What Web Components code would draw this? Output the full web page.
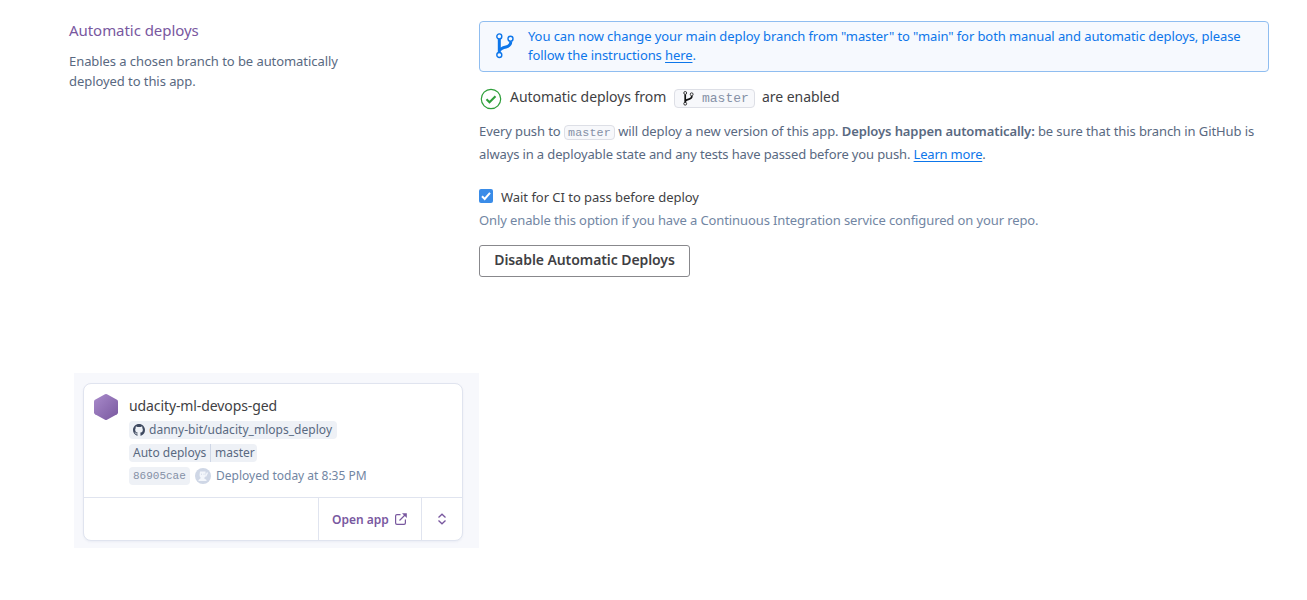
<!DOCTYPE html>
<html lang="en">
<head>
<meta charset="utf-8">
<title>Automatic deploys</title>
<style>
html,body{margin:0;background:#fff}
body{width:1307px;height:600px;overflow:hidden;font-family:"Noto Sans",sans-serif;font-size:13px;color:#3f3f44}
</style>
</head>
<body>
<deploy-page></deploy-page>
<script>
function define(name, html) {
  customElements.define(name, class extends HTMLElement {
    constructor() {
      super();
      this.attachShadow({ mode: 'open' }).innerHTML = html;
    }
  });
}

define('branch-icon', `
<style>:host{display:block;flex:none}svg{display:block;width:100%;height:100%}</style>
<svg viewBox="0 0 18 26" fill="none" stroke="currentColor">
  <path d="M3.300 6v14" stroke-width="3"/>
  <path d="M14.800 8.600c0 3.600-1.600 4.600-4.800 5.400-3.200.8-5.600 1.500-6.400 3.600" stroke-width="2.900"/>
  <circle cx="3.300" cy="3.400" r="2.500" stroke-width="1.400"/>
  <circle cx="14.500" cy="5.700" r="2.500" stroke-width="1.400"/>
  <circle cx="3.300" cy="22" r="2.500" stroke-width="1.400"/>
</svg>`);

define('section-intro', `
<style>
:host{display:block;white-space:nowrap}
h2{margin:-1px 0 0;font-size:15px;line-height:20px;font-weight:400;color:#79589f;letter-spacing:-.05px}
p{margin:11px 0 0;font-size:13px;line-height:20px;color:#596981;letter-spacing:-.065px}
</style>
<h2><slot name="title"></slot></h2><p><slot></slot></p>`);

define('info-banner', `
<style>
:host{display:flex;box-sizing:border-box;width:790px;height:51px;border:1px solid #8fbdf0;border-radius:4px;background:#f6f9fe;color:#0d76ea;padding:5px 0 0 16px;line-height:19px;white-space:nowrap;letter-spacing:-.09px}
branch-icon{width:18px;height:26px;margin:6px 14px 0 0}
</style>
<branch-icon></branch-icon><div><slot></slot></div>`);

define('branch-tag', `
<style>
:host{display:flex;box-sizing:border-box;width:81px;height:19px;border:1px solid #dddfe6;border-radius:4px;background:#f7f8fb;align-items:center;font:13px/17px "Liberation Mono",monospace;color:#8590a6;padding-left:8px}
branch-icon{width:11px;height:15px;color:#111;margin-right:8px}
</style>
<branch-icon></branch-icon><slot></slot>`);

define('code-chip', `
<style>
:host{display:inline-block;box-sizing:border-box;width:51px;height:15px;border:1px solid #dddfe6;border-radius:4px;background:#f7f8fb;font:11.7px/14px "Liberation Mono",monospace;color:#8590a6;text-align:center;vertical-align:-3px;letter-spacing:.1px;position:relative;top:-3px}
</style><slot></slot>`);

define('deploy-status', `
<style>
:host{display:flex;height:22px;font-size:14px;line-height:20px;white-space:nowrap;letter-spacing:-.05px}
svg{width:22px;height:22px;margin:1px 8px 0 1px;flex:none}
branch-tag{margin:2px 7px 0 8px;letter-spacing:0}
.a{width:156px}
</style>
<svg viewBox="0 0 22 22" fill="none" stroke="#2f9f3b"><circle cx="11" cy="11" r="9.7" stroke-width="1.2"/><path d="M6.500 11.200l3 3 6-6" stroke-width="2.100"/></svg>
<span class="a"><slot name="before"></slot></span><branch-tag><slot name="branch"></slot></branch-tag><slot name="after"></slot>`);

define('check-option', `
<style>
:host{display:block;white-space:nowrap}
.row{display:flex;line-height:20px;letter-spacing:-.035px}
svg{width:14px;height:14px;margin:2px 8px 0 0}
.hint{line-height:20px;margin-top:3px;color:#7286a3;letter-spacing:-.108px}
</style>
<div class="row"><svg viewBox="0 0 14 14"><rect width="14" height="14" rx="2" fill="#3a8ce8"/><path d="M3 7.200l2.700 2.800L11 3.800" fill="none" stroke="#fff" stroke-width="2"/></svg><slot></slot></div>
<div class="hint"><slot name="hint"></slot></div>`);

define('outline-button', `
<style>
:host{display:block}
button{box-sizing:border-box;display:block;width:211px;height:32px;padding:0 0 3px;background:#fff;border:1px solid #88888c;border-radius:3px;font:600 14px/20px "Noto Sans",sans-serif;color:#3f3f44;white-space:nowrap;letter-spacing:-.08px}
</style><button><slot></slot></button>`);

define('app-card', `
<style>
:host{display:block;box-sizing:border-box;width:405px;height:175px;padding:10px 0 0 9px;background:#f7f8fc}
.card{box-sizing:border-box;width:380px;height:158px;border:1px solid #e0e4ef;border-radius:8px;background:#fff;box-shadow:0 1px 2px #d9deea66;white-space:nowrap;display:flex;flex-direction:column}
.body{display:flex;height:113px;padding-left:10px}
.hex{width:24px;height:26px;margin:10px 11px 0 0;flex:none}
.name{font-size:14px;line-height:20px;margin-top:12px;color:#3f3f44;letter-spacing:-.1px}
.pill{box-sizing:border-box;display:flex;height:18px;border-radius:4px;background:#eef1f6;color:#596981;line-height:17px;font-size:12px}
.repo{margin-top:5px;padding:0 4px;width:208px;letter-spacing:.03px}
.repo svg{width:12px;height:12px;margin:3px 4px 0 0;flex:none}
.auto{margin-top:5px;width:128px}
.auto span{padding-left:4px}
.auto .l{box-sizing:border-box;width:82px;height:18px;border-right:1px solid #cfd7e6}
.last{display:flex;margin-top:5px;height:18px;color:#7286a3;font-size:12px;line-height:17px}
.sha{width:61px;padding-left:4px;font:11px/18px "Liberation Mono",monospace;color:#8590a6}
.last svg{width:16px;height:16px;margin:1px 5px 0}
.foot{display:flex;flex:1;border-top:1px solid #e0e4ef;color:#79589f;font-weight:600}
.sp{width:234px}
.open{box-sizing:border-box;display:flex;align-items:center;width:103px;padding-left:13px;border-left:1px solid #e0e4ef;font-size:12px}
.open svg{width:12px;height:12px;margin-left:6px}
.more{flex:1;display:flex;align-items:center;justify-content:center;border-left:1px solid #e0e4ef}
.more svg{width:10px;height:12px}
</style>
<div class="card">
 <div class="body">
  <svg class="hex" viewBox="0 0 24 26"><defs><linearGradient id="g" x1="0" y1="0" x2="1" y2="1"><stop offset="0" stop-color="#a98bcb"/><stop offset="1" stop-color="#79589f"/></linearGradient></defs><path d="M11 .3q1-.5 2 0l10 5.400q1 .6 1 1.700v11.200q0 1.100-1 1.700l-10 5.400q-1 .5-2 0l-10-5.400q-1-.6-1-1.700V7.400q0-1.100 1-1.700z" fill="url(#g)"/></svg>
  <div>
   <div class="name"><slot name="name"></slot></div>
   <div class="pill repo"><svg viewBox="0 0 16 16" fill="#3f4a60"><path d="M8 0C3.580 0 0 3.580 0 8c0 3.540 2.290 6.530 5.470 7.590.4.070.55-.17.55-.38 0-.19-.010-.82-.010-1.490-2.010.37-2.530-.49-2.690-.94-.090-.23-.48-.94-.82-1.130-.28-.15-.68-.52-.010-.53.63-.010 1.080.58 1.230.82.72 1.210 1.870.87 2.330.66.070-.52.28-.87.51-1.070-1.780-.2-3.640-.89-3.640-3.950 0-.87.31-1.590.82-2.150-.080-.2-.36-1.020.080-2.120 0 0 .67-.21 2.200.82.64-.18 1.320-.27 2-.27s1.360.090 2 .27c1.530-1.040 2.200-.82 2.200-.82.44 1.100.16 1.920.080 2.120.51.56.82 1.270.82 2.150 0 3.070-1.870 3.750-3.650 3.950.29.25.54.73.54 1.480 0 1.070-.010 1.930-.010 2.200 0 .21.15.46.55.38A8.010 8.010 0 0 0 16 8c0-4.420-3.580-8-8-8z"/></svg><slot name="repo"></slot></div>
   <div class="pill auto"><span class="l">Auto deploys</span><span><slot name="branch"></slot></span></div>
   <div class="last"><div class="pill sha"><slot name="sha"></slot></div><svg viewBox="0 0 16 16"><circle cx="8" cy="8" r="8" fill="#cfd7e6"/><path d="M5 3.500h5.500v4q0 2-1.700 2.500l2.700 2v1h-8v-1l2.400-2Q4.500 9 4.500 7z" fill="#f3f6fb"/><path d="M10.500 8.500l2-4" stroke="#f3f6fb" stroke-width="1.400"/><path d="M6 6.200h1M8.500 6.200h1" stroke="#cfd7e6"/></svg><slot name="time"></slot></div>
  </div>
 </div>
 <div class="foot"><div class="sp"></div><div class="open">Open app<svg viewBox="0 0 12 12" fill="none" stroke="currentColor" stroke-width="1.200"><path d="M5.500 1.600H2Q.6 1.600.6 3v7q0 1.400 1.400 1.400h7q1.400 0 1.400-1.400V6.500M4.500 7.500l5.500-5.500"/><path d="M7 .2h4.800V5z" fill="currentColor" stroke="none"/></svg></div>
 <div class="more"><svg viewBox="0 0 10 12" fill="none" stroke="currentColor" stroke-width="1.300"><path d="M1.500 4.500L5 1.200l3.500 3.300M1.500 7.500L5 10.800l3.500-3.300"/></svg></div></div>
</div>`);

define('deploy-page', `
<style>
:host{display:block}
.top{display:flex;padding:21px 0 0 69px;height:352px;box-sizing:border-box}
section-intro{width:410px}
deploy-status{margin-top:15px}
p{margin:11px 0 0;line-height:23px;color:#596981;white-space:nowrap;letter-spacing:-.09px}
p b{font-weight:600}
.second{letter-spacing:-.13px}
a{color:#0d76ea;text-decoration:underline;text-underline-offset:2px}
.second a{letter-spacing:-.2px}
check-option{margin-top:21px}
outline-button{margin-top:15px}
app-card{margin:21px 0 0 74px}
</style>
<div class="top">
<section-intro><span slot="title">Automatic deploys</span>Enables a chosen branch to be automatically<br>deployed to this app.</section-intro>
<div>
<info-banner><span>You can now change your main deploy branch from "master" to "main" for both manual and automatic deploys, please</span><br>follow the instructions <a>here</a>.</info-banner>
<deploy-status><span slot="before">Automatic deploys from</span><span slot="branch">master</span><span slot="after">are enabled</span></deploy-status>
<p><span>Every push to <code-chip>master</code-chip> will deploy a new version of this app. <b>Deploys happen automatically:</b> be sure that this branch in GitHub is</span><br><span class="second">always in a deployable state and any tests have passed before you push. <a>Learn more</a>.</span></p>
<check-option>Wait for CI to pass before deploy<span slot="hint">Only enable this option if you have a Continuous Integration service configured on your repo.</span></check-option>
<outline-button>Disable Automatic Deploys</outline-button>
</div>
</div>
<app-card><span slot="name">udacity-ml-devops-ged</span><span slot="repo">danny-bit/udacity_mlops_deploy</span><span slot="branch">master</span><span slot="sha">86905cae</span><span slot="time">Deployed today at 8:35 PM</span></app-card>`);
</script>
</body>
</html>
